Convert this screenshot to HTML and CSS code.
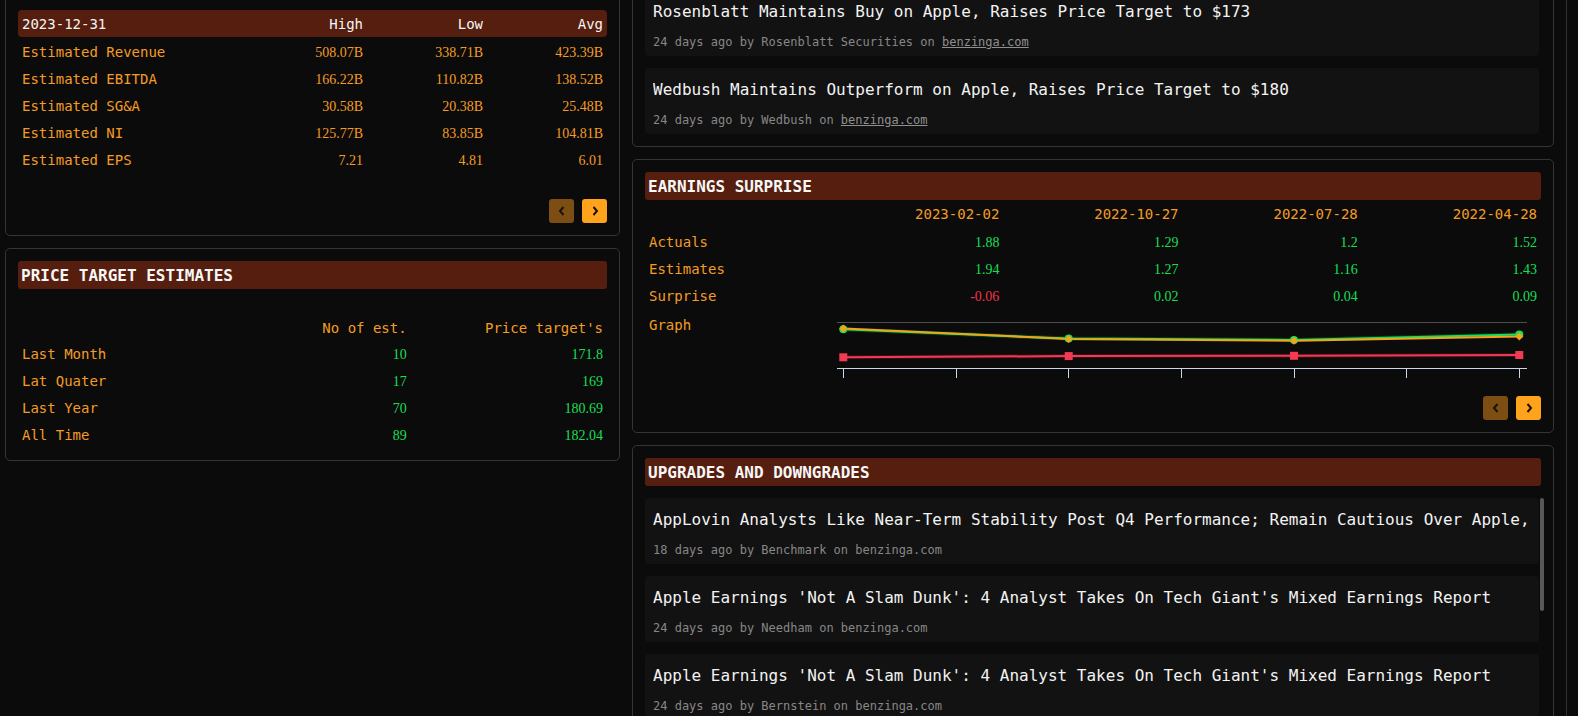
FILE: index.html
```html
<!DOCTYPE html>
<html lang="en">
<head>
<meta charset="utf-8">
<title>Analyst overview</title>
<link rel="stylesheet" href="styles.css">
</head>
<body>
<div class="app">
  <div class="layout">
    <div class="col">
      <section class="card">
        <h2 class="bar">ANALYST ESTIMATES</h2>
        <div class="tabs">
          <button class="tab">2023</button>
          <button class="tab">2024</button>
          <button class="tab">2025</button>
        </div>
        <table class="grid est">
          <colgroup><col><col class="w120"><col class="w120"><col class="w120"></colgroup>
          <thead>
            <tr class="head"><th class="l">2023-12-31</th><th>High</th><th>Low</th><th>Avg</th></tr>
          </thead>
          <tbody>
            <tr><td class="l">Estimated Revenue</td><td class="n">508.07B</td><td class="n">338.71B</td><td class="n">423.39B</td></tr>
            <tr><td class="l">Estimated EBITDA</td><td class="n">166.22B</td><td class="n">110.82B</td><td class="n">138.52B</td></tr>
            <tr><td class="l">Estimated SG&amp;A</td><td class="n">30.58B</td><td class="n">20.38B</td><td class="n">25.48B</td></tr>
            <tr><td class="l">Estimated NI</td><td class="n">125.77B</td><td class="n">83.85B</td><td class="n">104.81B</td></tr>
            <tr><td class="l">Estimated EPS</td><td class="n">7.21</td><td class="n">4.81</td><td class="n">6.01</td></tr>
          </tbody>
        </table>
        <div class="pager">
          <button class="pg prev" aria-label="Previous"><svg width="10" height="12" viewBox="0 0 10 12"><path d="M6.5 2 L3 6 L6.5 10" fill="none" stroke="#1c1206" stroke-width="2"/></svg></button>
          <button class="pg next" aria-label="Next"><svg width="10" height="12" viewBox="0 0 10 12"><path d="M3.5 2 L7 6 L3.5 10" fill="none" stroke="#1c1206" stroke-width="2"/></svg></button>
        </div>
      </section>

      <section class="card">
        <h2 class="bar">PRICE TARGET ESTIMATES</h2>
        <table class="grid pt">
          <thead>
            <tr><th class="l"></th><th class="o">No of est.</th><th class="o">Price target's</th></tr>
          </thead>
          <tbody>
            <tr><td class="l">Last Month</td><td class="n g">10</td><td class="n g">171.8</td></tr>
            <tr><td class="l">Lat Quater</td><td class="n g">17</td><td class="n g">169</td></tr>
            <tr><td class="l">Last Year</td><td class="n g">70</td><td class="n g">180.69</td></tr>
            <tr><td class="l">All Time</td><td class="n g">89</td><td class="n g">182.04</td></tr>
          </tbody>
        </table>
      </section>
    </div>

    <div class="col">
      <section class="card">
        <h2 class="bar">ANALYST RATINGS</h2>
        <div class="list">
          <article class="item">
            <div class="item-title">Evercore ISI Group Maintains Outperform on Apple, Raises Price Target to $180</div>
            <div class="item-meta">24 days ago by Evercore ISI Group on <a href="#">benzinga.com</a></div>
          </article>
          <article class="item">
            <div class="item-title">Rosenblatt Maintains Buy on Apple, Raises Price Target to $173</div>
            <div class="item-meta">24 days ago by Rosenblatt Securities on <a href="#">benzinga.com</a></div>
          </article>
          <article class="item">
            <div class="item-title">Wedbush Maintains Outperform on Apple, Raises Price Target to $180</div>
            <div class="item-meta">24 days ago by Wedbush on <a href="#">benzinga.com</a></div>
          </article>
        </div>
      </section>

      <section class="card">
        <h2 class="bar">EARNINGS SURPRISE</h2>
        <table class="grid es">
          <thead>
            <tr><th class="l"></th><th class="o">2023-02-02</th><th class="o">2022-10-27</th><th class="o">2022-07-28</th><th class="o">2022-04-28</th></tr>
          </thead>
          <tbody>
            <tr><td class="l">Actuals</td><td class="n g">1.88</td><td class="n g">1.29</td><td class="n g">1.2</td><td class="n g">1.52</td></tr>
            <tr><td class="l">Estimates</td><td class="n g">1.94</td><td class="n g">1.27</td><td class="n g">1.16</td><td class="n g">1.43</td></tr>
            <tr><td class="l">Surprise</td><td class="n r">-0.06</td><td class="n g">0.02</td><td class="n g">0.04</td><td class="n g">0.09</td></tr>
            <tr>
              <td class="l top">Graph</td>
              <td colspan="4" class="chart-cell">
                <svg class="chart" width="709" height="68" viewBox="0 0 709 68">
                  <line x1="9" y1="10.5" x2="699" y2="10.5" stroke="#4d4d4d" stroke-width="1"/>
                  <line x1="9" y1="56.5" x2="699" y2="56.5" stroke="#ccd6eb" stroke-width="1"/>
                  <path d="M15.5 56.5V66 M128.5 56.5V66 M240.5 56.5V66 M353.5 56.5V66 M466.5 56.5V66 M578.5 56.5V66 M691.5 56.5V66" stroke="#ccd6eb" stroke-width="1"/>
                  <polyline points="15.3,45.3 240.7,44.1 466,43.8 691.3,43" fill="none" stroke="#5a1420" stroke-width="4" opacity="0.6"/>
                  <polyline points="15.3,45.3 240.7,44.1 466,43.8 691.3,43" fill="none" stroke="#f23a53" stroke-width="2"/>
                  <polyline points="15.3,17.3 240.7,26.6 466,28 691.3,22.5" fill="none" stroke="#0c5a25" stroke-width="4" opacity="0.6"/>
                  <polyline points="15.3,17.3 240.7,26.6 466,28 691.3,22.5" fill="none" stroke="#18e05a" stroke-width="2"/>
                  <polyline points="15.3,16.4 240.7,27 466,28.7 691.3,24.5" fill="none" stroke="#f6a21c" stroke-width="2"/>
                  <g fill="#18e05a">
                    <circle cx="15.3" cy="17.3" r="4"/>
                    <circle cx="240.7" cy="26.6" r="4"/>
                    <circle cx="466" cy="28" r="4"/>
                    <circle cx="691.3" cy="22.5" r="4"/>
                  </g>
                  <g fill="#f6a21c">
                    <path d="M15.3 12.4 L19.3 16.4 L15.3 20.4 L11.3 16.4Z"/>
                    <path d="M240.7 23 L244.7 27 L240.7 31 L236.7 27Z"/>
                    <path d="M466 24.7 L470 28.7 L466 32.7 L462 28.7Z"/>
                    <path d="M691.3 20.5 L695.3 24.5 L691.3 28.5 L687.3 24.5Z"/>
                  </g>
                  <g fill="#f23a53">
                    <rect x="11.3" y="41.3" width="8" height="8"/>
                    <rect x="236.7" y="40.1" width="8" height="8"/>
                    <rect x="462" y="39.8" width="8" height="8"/>
                    <rect x="687.3" y="39" width="8" height="8"/>
                  </g>
                </svg>
              </td>
            </tr>
          </tbody>
        </table>
        <div class="pager">
          <button class="pg prev" aria-label="Previous"><svg width="10" height="12" viewBox="0 0 10 12"><path d="M6.5 2 L3 6 L6.5 10" fill="none" stroke="#1c1206" stroke-width="2"/></svg></button>
          <button class="pg next" aria-label="Next"><svg width="10" height="12" viewBox="0 0 10 12"><path d="M3.5 2 L7 6 L3.5 10" fill="none" stroke="#1c1206" stroke-width="2"/></svg></button>
        </div>
      </section>

      <section class="card">
        <h2 class="bar">UPGRADES AND DOWNGRADES</h2>
        <div class="list scroll">
          <article class="item">
            <div class="item-title">AppLovin Analysts Like Near-Term Stability Post Q4 Performance; Remain Cautious Over Apple, Google Dependence</div>
            <div class="item-meta">18 days ago by Benchmark on benzinga.com</div>
          </article>
          <article class="item">
            <div class="item-title">Apple Earnings 'Not A Slam Dunk': 4 Analyst Takes On Tech Giant's Mixed Earnings Report</div>
            <div class="item-meta">24 days ago by Needham on benzinga.com</div>
          </article>
          <article class="item">
            <div class="item-title">Apple Earnings 'Not A Slam Dunk': 4 Analyst Takes On Tech Giant's Mixed Earnings Report</div>
            <div class="item-meta">24 days ago by Bernstein on benzinga.com</div>
          </article>
          <article class="item">
            <div class="item-title">Apple Earnings 'Not A Slam Dunk': 4 Analyst Takes On Tech Giant's Mixed Earnings Report</div>
            <div class="item-meta">24 days ago by Rosenblatt Securities on benzinga.com</div>
          </article>
          <div class="thumb"></div>
        </div>
      </section>
    </div>
  </div>
</div>
</body>
</html>
```

FILE: styles.css
```css
* { box-sizing: border-box; }

html, body {
  margin: 0;
  height: 100%;
}

body {
  background: #0b0b0b;
  color: #eeeeee;
  font-family: "DejaVu Sans Mono", "Liberation Mono", monospace;
  overflow: hidden;
}

.app {
  width: 1567px;
  height: 716px;
  padding-left: 5px;
  border-right: 1px solid #313131;
  overflow: hidden;
}

.layout {
  display: grid;
  grid-template-columns: 615px 922px;
  column-gap: 12px;
  align-items: start;
  margin-top: -141px;
}

.col {
  display: flex;
  flex-direction: column;
  gap: 12px;
}

.card {
  border: 1px solid #353535;
  border-radius: 5px;
  padding: 12px;
  background: #0b0b0b;
}

.bar {
  margin: 0;
  height: 28px;
  line-height: 26px;
  padding: 2px 3px 0;
  background: #561e0e;
  color: #f7f7f7;
  font-size: 16px;
  font-weight: 700;
  border-radius: 3px;
}

.tabs {
  display: flex;
  gap: 8px;
  align-items: flex-start;
  height: 86px;
  margin-top: 12px;
}

.tab {
  height: 24px;
  padding: 0 8px;
  border: 0;
  border-radius: 3px;
  background: #1a1a1a;
  color: #f49b25;
  font: 13px "DejaVu Sans Mono", monospace;
}

/* tables */
.grid {
  width: 100%;
  border-collapse: collapse;
  table-layout: fixed;
  font-size: 14px;
}

.grid th,
.grid td {
  line-height: 19px;
  text-align: right;
  font-weight: 400;
  white-space: nowrap;
}

.grid th { padding: 5px 4px 3px; }
.grid td { padding: 6px 4px 2px; }

.grid .l {
  text-align: left;
  color: #f49b25;
}

.grid .n {
  font-family: "Liberation Serif", "DejaVu Serif", serif;
  font-size: 14px;
  color: #f49b25;
}

.grid .g { color: #17df55; }
.grid .r { color: #f2344b; }
.grid .o { color: #f49b25; }

.est { margin-top: 12px; }
.w120 { width: 120px; }

.est .head th {
  background: #561e0e;
  color: #f5f5f5;
}
.est .head th:first-child { border-radius: 4px 0 0 4px; }
.est .head th:last-child { border-radius: 0 4px 4px 0; }

.pt { margin-top: 24px; }
.pt th { padding: 6px 4px 2px; }
.pt td { padding: 5px 4px 3px; }

.es td.top {
  vertical-align: top;
  padding-top: 8px;
}

.es td.chart-cell {
  padding: 4px;
  vertical-align: top;
}

.chart {
  display: block;
}

/* pager */
.pager {
  display: flex;
  justify-content: flex-end;
  gap: 8px;
  margin-top: 12px;
}

.est + .pager { margin-top: 27px; }

.pg {
  width: 25px;
  height: 24px;
  padding: 0;
  border: 0;
  border-radius: 3px;
  display: grid;
  place-items: center;
}

.pg.prev { background: #7d4e13; }
.pg.next { background: #ffa31d; }
.pg svg { display: block; }

/* news lists */
.list {
  position: relative;
  display: flex;
  flex-direction: column;
  gap: 12px;
  margin-top: 12px;
}

.item {
  background: #121212;
  border-radius: 4px;
  padding: 10px 8px 6px;
  margin-right: 2px;
}

.item-title {
  font-size: 16px;
  line-height: 24px;
  color: #f2f2f2;
  white-space: nowrap;
  overflow: hidden;
}

.item-meta {
  margin-top: 10px;
  font-size: 12px;
  line-height: 16px;
  color: #878787;
}

.item-meta a {
  color: #8f8f8f;
  text-decoration: underline;
}

.thumb {
  position: absolute;
  top: 0;
  right: -3px;
  width: 4px;
  height: 113px;
  border-radius: 2px;
  background: #585858;
}
```
